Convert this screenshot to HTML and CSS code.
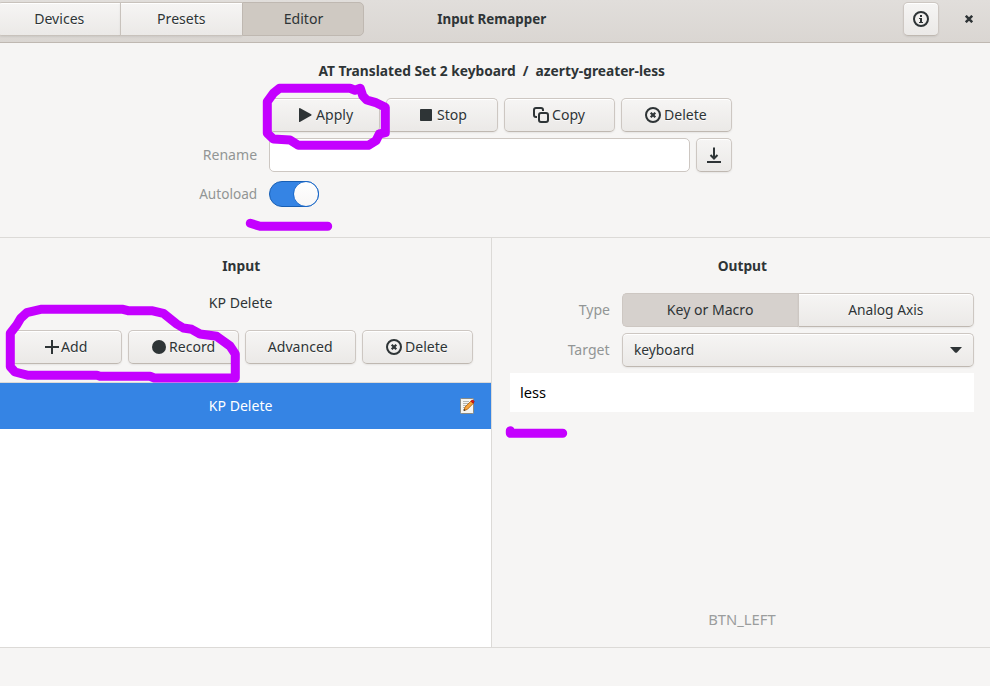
FILE: index.html
```html
<!DOCTYPE html>
<html lang="en">
<head>
<meta charset="utf-8">
<title>Input Remapper</title>
<link rel="stylesheet" href="styles.css">
</head>
<body>
<svg class="defs" aria-hidden="true">
  <symbol id="delete" viewBox="0 0 16 16"><circle cx="8" cy="8" r="7" fill="none" stroke="currentColor" stroke-width="2"/><path d="M5.7 5.7l4.6 4.6M10.3 5.7l-4.6 4.6" stroke="currentColor" stroke-width="2.2"/></symbol>
</svg>
<div class="window">
  <header class="headerbar">
    <nav class="tabs">
      <button class="btn tab"><span class="t">Devices</span></button>
      <button class="btn tab"><span class="t">Presets</span></button>
      <button class="btn tab active"><span class="t">Editor</span></button>
    </nav>
    <h1 class="title"><span class="t">Input Remapper</span></h1>
    <div class="controls">
      <button class="btn square"><svg class="icon" viewBox="0 0 16 16"><circle cx="8" cy="8" r="7" fill="none" stroke="currentColor" stroke-width="2"/><path d="M7 4h2v2H7zM6 7h3v4h1v1H6v-1h1V8H6z" fill="currentColor"/></svg></button>
      <svg class="close" viewBox="0 0 8 8"><path d="M.8.8l6.4 6.4M7.2.8L.8 7.2" stroke="currentColor" stroke-width="2.5"/></svg>
    </div>
  </header>

  <section class="preset">
    <h2 class="heading"><span class="t">AT Translated Set 2 keyboard&nbsp; /&nbsp; azerty-greater-less</span></h2>
    <div class="form">
      <div class="buttons full">
        <button class="btn"><svg class="icon" viewBox="0 0 16 16"><path d="M2 1.4q0-.7.8-.4l11.4 6.2q1 .8 0 1.4L2.8 15q-.8.3-.8-.5z" fill="currentColor"/></svg><span class="t">Apply</span></button>
        <button class="btn"><svg class="icon" viewBox="0 0 16 16"><rect x="2" y="2" width="12" height="12" rx=".8" fill="currentColor"/></svg><span class="t">Stop</span></button>
        <button class="btn loose"><svg class="icon" viewBox="0 0 16 16"><rect x="6" y="6" width="9" height="9" rx="2" fill="none" stroke="currentColor" stroke-width="2"/><path d="M4 10H3Q1 10 1 8V3Q1 1 3 1h5q2 0 2 2v1" fill="none" stroke="currentColor" stroke-width="2"/></svg><span class="t">Copy</span></button>
        <button class="btn loose"><svg class="icon"><use href="#delete"/></svg><span class="t">Delete</span></button>
      </div>
      <label class="label"><span class="t">Rename</span></label>
      <div class="rename"><input class="entry" type="text"><button class="btn square"><svg class="icon" viewBox="0 0 16 16"><path d="M8 .5v11M4.5 8L8 11.5 11.5 8M1 15h14" fill="none" stroke="currentColor" stroke-width="2"/></svg></button></div>
      <label class="label auto"><span class="t">Autoload</span></label>
      <div class="switch"><span class="knob"></span></div>
    </div>
  </section>

  <main class="panes">
    <section class="input">
      <h2 class="heading"><span class="t">Input</span></h2>
      <p class="recorded"><span class="t">KP Delete</span></p>
      <div class="buttons">
        <button class="btn tight"><svg class="icon" viewBox="0 0 16 16"><path d="M8 1v14M1 8h14" stroke="currentColor" stroke-width="2"/></svg><span class="t">Add</span></button>
        <button class="btn record"><svg class="icon" viewBox="0 0 16 16"><circle cx="8" cy="8" r="7" fill="currentColor"/></svg><span class="t">Record</span></button>
        <button class="btn"><span class="t">Advanced</span></button>
        <button class="btn loose"><svg class="icon"><use href="#delete"/></svg><span class="t">Delete</span></button>
      </div>
      <div class="list">
        <div class="row"><span class="t">KP Delete</span>
          <svg class="edit" viewBox="0 0 16 16"><rect x="1.5" y=".5" width="13" height="15" rx=".8" fill="#f5f5f1" stroke="#888a85"/><path d="M4 3.5h6M4 5.5h7M4 7.5h4M4 9.5h3M4 11.5h2" stroke="#b4b6b1"/><path d="M5 12.5l1-3.4 6-6 2.3 2.3-6 6z" fill="#f8a53c" stroke="#a65b08" stroke-width=".8"/><path d="M11.8 3.2l1-1q1.4-.8 2.4 1.5l-1 1.5z" fill="#dc1c1c" stroke="#a40000" stroke-width=".6"/><path d="M4.5 13l.8-1.8 1.2 1z" fill="#222"/></svg>
        </div>
      </div>
    </section>
    <section class="output">
      <h2 class="heading"><span class="t">Output</span></h2>
      <div class="fields">
        <label class="label"><span class="t">Type</span></label>
        <div class="toggle"><button class="btn active"><span class="t">Key or Macro</span></button><button class="btn"><span class="t">Analog Axis</span></button></div>
        <label class="label"><span class="t">Target</span></label>
        <button class="btn combo"><span class="t">keyboard</span><svg class="arrow" viewBox="0 0 12 6"><path d="M0 0h12L7 5.4q-1 .8-2 0z" fill="currentColor"/></svg></button>
      </div>
      <div class="editor"><span class="t">less</span></div>
      <p class="hint"><span class="t">BTN_LEFT</span></p>
    </section>
  </main>
  <footer class="status"></footer>
</div>
<svg class="marks" viewBox="0 0 990 686" aria-hidden="true">
  <path d="M279.5 88.3H350l5 2 5.3-2 2.4 7.4 4 4.3 8.3 2.3 10.3 5v25.4l-6 1.3-3.3 6.7-7.7 4.6h-70l-8.3-5.3-16.7-1-6-5.7v-31.6l6-8.4z"/>
  <path d="M250.3 223.3l9.7 3h67.7M510.3 430.7v2.6h52.4"/>
  <path d="M40.7 309.3H123l5 1.4h23.7l11.6 2.6 13.4 10.7 6.6 4 8.4 1.3 8.3 4.7 16.7 2.3L230 346l5.3 8v24h-81l-4.3-1.7h-50l-3-1H28.3L15 372l-4.7-5.3v-33.4l6.4-8.3 4-6.7 6-5.6z"/>
</svg>
</body>
</html>
```
FILE: styles.css
```css
* { box-sizing: border-box; }
body, h1, h2, p { margin: 0; }
body { width: 990px; height: 686px; overflow: hidden; background: #f6f5f4; color: #2e3436; font: 15.3px/20px "Noto Sans", sans-serif; }
.defs { position: absolute; width: 0; height: 0; }
.t { display: inline-block; white-space: nowrap; transform: translateY(-1px) scaleX(.92); }
.window { display: flex; flex-direction: column; height: 686px; }

.btn { display: flex; align-items: center; justify-content: center; gap: 3px; height: 34px; min-width: 0; padding: 0; font: inherit; color: inherit; border: 1px solid #cdc7c2; border-bottom-color: #bfb8b1; border-radius: 5px; background: linear-gradient(#f6f5f4, #ebe9e7); box-shadow: inset 0 1px #fff, 0 1px 2px rgba(0,0,0,.07); text-shadow: 0 1px rgba(255,255,255,.75); }
.btn.active { background: #d6d1cd; border-color: #cdc7c2; box-shadow: none; text-shadow: none; }
.square { width: 36px; flex: none; }
.icon { width: 16px; height: 16px; flex: none; }
.icon + .t { transform-origin: left; margin-right: -4px; }
.loose .icon { margin: 0 1px 0 -1px; }
.loose .t { margin-left: -1px; }
.tight { gap: 1px; }
.tight .icon { margin-left: -3px; }
.record { gap: 2px; }

.headerbar { display: grid; grid-template-columns: 364px 1fr 364px; height: 43px; padding-top: 2px; background: linear-gradient(#e1dedb, #dad6d2); border-bottom: 1px solid #bfb8b1; }
.tabs { display: grid; grid-template-columns: 123px 122px 122px; margin-left: -3px; }
.tab { border-radius: 0; border-right-width: 0; border-color: #c8c2bc; }
.tab:first-child { border-radius: 5px 0 0 5px; }
.headerbar .tab.active { border: 1px solid #bfb8b1; border-radius: 0 5px 5px 0; background: #cfc9c2; }
.title { text-align: center; padding: 7px 0 0 3px; justify-self: center; margin-right: 10px; }
.title, .heading { font-size: 14.67px; font-weight: 700; }
.title .t { transform: translateY(-1px) scaleX(.912); }
.heading .t { transform: translateY(-1px) scaleX(.938); }
.controls { display: flex; justify-content: flex-end; align-items: center; height: 34px; gap: 26px; padding-right: 17px; }
.close { width: 8px; height: 8px; }

.preset { height: 195px; border-bottom: 1px solid #dcdad7; }
.heading { text-align: center; }
.preset .heading { padding-top: 18px; height: 55px; margin-left: -7px; }
.form { display: grid; grid-template-columns: 257px 463px; column-gap: 12px; row-gap: 6px; align-items: center; }
.full { grid-column: 2; }
.buttons { display: grid; grid-template-columns: repeat(4, 1fr); gap: 6px; }
.label { color: #929595; text-align: right; }
.label .t { transform-origin: right; }
.auto .t { transform: translateY(-1px) scaleX(.89); }
.rename { display: flex; gap: 6px; }
.entry { flex: 1; min-width: 0; height: 34px; padding: 0 8px; font: inherit; border: 1px solid #cdc7c2; border-radius: 5px; background: #fff; }
.switch { width: 50px; height: 26px; margin-top: 3px; border: 1px solid #185fb4; border-radius: 13px; background: #3584e4; display: flex; justify-content: flex-end; }
.knob { width: 26px; height: 26px; margin: -1px; border: 1px solid #1b6acb; border-radius: 50%; background: linear-gradient(#fff, #f8f7f6); }
.auto { margin-top: 3px; }

.panes { display: grid; grid-template-columns: 492px 1fr; height: 409px; }
.input { display: flex; flex-direction: column; border-right: 1px solid #dcdad7; }
.input > .heading, .output > .heading { padding-top: 18px; }
.input > .heading, .recorded { width: 482px; text-align: center; }
.recorded { padding-top: 17px; }
.input .buttons { margin: 17px 18px 18px 11px; }
.list { flex: 1; background: #fff; border-top: 1px solid #dcdad7; }
.row { display: grid; grid-template-columns: 482px; justify-items: center; align-items: center; height: 46px; background: #3584e4; color: #fff; position: relative; }
.edit { position: absolute; left: 459px; top: 15px; width: 16px; height: 16px; }
.output { padding: 0 16px 0 18px; display: flex; flex-direction: column; }
.fields { display: grid; grid-template-columns: 100px 352px; column-gap: 12px; row-gap: 6px; align-items: center; margin-top: 17px; }
.toggle { display: grid; grid-template-columns: 1fr 1fr; }
.toggle .btn:first-child { border-radius: 5px 0 0 5px; border-right-width: 0; }
.toggle .btn:last-child { border-radius: 0 5px 5px 0; }
.toggle .btn:last-child .t { transform: translateY(-1px) scaleX(.9); }
.combo { justify-content: space-between; padding: 0 11px; }
.combo .t, .editor .t { transform-origin: left; }
.combo .t { transform: translateY(-1px) scaleX(.9); }
.editor .t { transform: translateY(-1px) scaleX(.96); }
.arrow { width: 12px; height: 6px; }
.editor { height: 39px; margin-top: 6px; padding: 10px; background: #fff; color: #000; }
.hint { margin-top: auto; padding-bottom: 17px; text-align: center; color: #9b9d9d; }
.hint .t { transform: translateY(-1px) scaleX(.965); }
.status { flex: 1; border-top: 1px solid #dcdad7; }
.marks { position: absolute; left: 0; top: 0; width: 990px; height: 686px; pointer-events: none; fill: none; stroke: #c400ff; stroke-width: 9; stroke-linecap: round; stroke-linejoin: round; }
```
